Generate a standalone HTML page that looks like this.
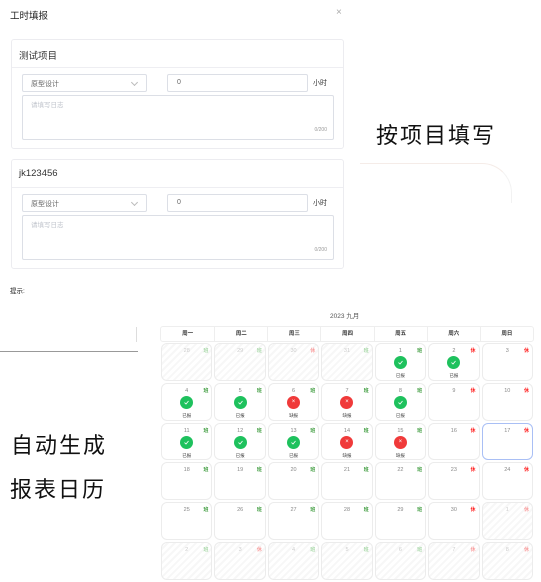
<!DOCTYPE html>
<html><head><meta charset="utf-8"><style>
*{margin:0;padding:0;box-sizing:border-box}
body{width:541px;height:582px;background:#fff;position:relative;overflow:hidden;font-family:"Liberation Sans","Noto Sans CJK SC",sans-serif;color:#333}
.a{position:absolute}
.card{position:absolute;left:11px;width:333px;height:110px;border:1px solid #ececf0;border-radius:3px}
.card .h{position:absolute;left:0;right:0;top:0;height:28px;border-bottom:1px solid #eeeef2;font-size:9.5px;padding:8px 0 0 7px;color:#333}
.sel,.inp,.ta{position:absolute;border:1px solid #dcdfe6;border-radius:2px;font-size:7px;color:#666}
.sel{left:10px;top:34px;width:125px;height:18px;padding:4px 0 0 8px}
.sel:after{content:"";position:absolute;right:9px;top:5px;width:4px;height:4px;border-right:1px solid #bbb;border-bottom:1px solid #bbb;transform:rotate(45deg)}
.inp{left:155px;top:34px;width:141px;height:18px;padding:4px 0 0 9px}
.hr{position:absolute;left:301px;top:38px;font-size:7px;color:#333}
.ta{left:10px;top:55px;width:312px;height:45px;padding:3px 0 0 8px;color:#c0c4cc;font-size:6.5px}
.ta i{position:absolute;right:6px;bottom:6px;font-style:normal;font-size:5px;color:#999}
.big{position:absolute;font-size:22px;color:#111;letter-spacing:2px;white-space:nowrap}
#cal{position:absolute;left:160px;top:326px;width:374px}
.hd{display:grid;grid-template-columns:repeat(7,1fr);height:16px;border:1px solid #eee;border-radius:3px}
.hd div{font-size:5.5px;text-align:center;line-height:15px;border-left:1px solid #eee;color:#333;font-weight:bold}
.hd div:first-child{border-left:none}
.g{display:grid;grid-template-columns:repeat(7,1fr);grid-auto-rows:39.8px}
.c{margin:1px;border:1px solid #ececec;border-radius:6px;position:relative;background:#fff}
.c.o{background:repeating-linear-gradient(135deg,#fff 0 3px,#f7f7f7 3px 5px);color:#ccc}
.c .n{position:absolute;left:0;right:0;top:4px;text-align:center;font-size:5.5px;color:#888}
.c.o .n{color:#ccc}
.c .b{position:absolute;right:3px;top:3px;font-size:5px;font-weight:bold}
.b.w{color:#3a9a3a}.b.r{color:#f22}
.c.o .b.w{color:#a8d8a8}.c.o .b.r{color:#f9a0a0}
.c .ic{position:absolute;left:50%;top:12px;margin-left:-6.5px;width:13px;height:13px;border-radius:50%;color:#fff;font-size:6px;text-align:center;line-height:13px}
.ic svg{position:absolute;left:4px;top:4px}
.ic.ok{background:#1ec15d}.ic.no{background:#f03a3a}
.c .l{position:absolute;left:0;right:0;top:29px;text-align:center;font-size:4.5px;color:#444}
.sel17{border:1.5px solid #a9bff5}
</style></head><body>
<div class="a" style="left:10px;top:8px;font-size:9.5px;color:#222">工时填报</div>
<div class="a" style="left:336px;top:7px;font-size:10px;color:#aaa">×</div>

<div class="card" style="top:39px"><div class="h">测试项目</div>
<div class="sel">原型设计</div><div class="inp">0</div><div class="hr">小时</div>
<div class="ta">请填写日志<i>0/200</i></div></div>

<div class="card" style="top:159px"><div class="h">jk123456</div>
<div class="sel">原型设计</div><div class="inp">0</div><div class="hr">小时</div>
<div class="ta">请填写日志<i>0/200</i></div></div>

<div class="a" style="left:10px;top:285px;font-size:6.5px;color:#222">提示:</div>
<div class="a" style="left:0;top:351px;width:138px;height:1px;background:#999"></div>
<div class="a" style="left:136px;top:327px;width:2px;height:15px;border-left:1px solid #ddd"></div>

<div class="big" style="left:376px;top:118px">按项目填写</div>
<div class="big" style="left:11px;top:428px">自动生成</div>
<div class="big" style="left:10px;top:472px">报表日历</div>
<div class="a" style="left:360px;top:163px;width:152px;height:40px;border-top:1px solid #f5ece8;border-right:1px solid #f2f2f2;border-top-right-radius:30px"></div>

<div class="a" style="left:330px;top:310px;font-size:6.5px;color:#555">2023 九月</div>

<div id="cal">
<div class="hd"><div>周一</div><div>周二</div><div>周三</div><div>周四</div><div>周五</div><div>周六</div><div>周日</div></div>
<div class="g">
<div class="c o"><span class="n">28</span><span class="b w">班</span></div>
<div class="c o"><span class="n">29</span><span class="b w">班</span></div>
<div class="c o"><span class="n">30</span><span class="b r">休</span></div>
<div class="c o"><span class="n">31</span><span class="b w">班</span></div>
<div class="c"><span class="n">1</span><span class="b w">班</span><span class="ic ok"><svg width="5" height="5" viewBox="0 0 5 5"><path d="M0.5 2.6L2 4L4.5 1" stroke="#fff" stroke-width="0.8" fill="none"/></svg></span><span class="l">已报</span></div>
<div class="c"><span class="n">2</span><span class="b r">休</span><span class="ic ok"><svg width="5" height="5" viewBox="0 0 5 5"><path d="M0.5 2.6L2 4L4.5 1" stroke="#fff" stroke-width="0.8" fill="none"/></svg></span><span class="l">已报</span></div>
<div class="c"><span class="n">3</span><span class="b r">休</span></div>

<div class="c"><span class="n">4</span><span class="b w">班</span><span class="ic ok"><svg width="5" height="5" viewBox="0 0 5 5"><path d="M0.5 2.6L2 4L4.5 1" stroke="#fff" stroke-width="0.8" fill="none"/></svg></span><span class="l">已报</span></div>
<div class="c"><span class="n">5</span><span class="b w">班</span><span class="ic ok"><svg width="5" height="5" viewBox="0 0 5 5"><path d="M0.5 2.6L2 4L4.5 1" stroke="#fff" stroke-width="0.8" fill="none"/></svg></span><span class="l">已报</span></div>
<div class="c"><span class="n">6</span><span class="b w">班</span><span class="ic no">×</span><span class="l">缺报</span></div>
<div class="c"><span class="n">7</span><span class="b w">班</span><span class="ic no">×</span><span class="l">缺报</span></div>
<div class="c"><span class="n">8</span><span class="b w">班</span><span class="ic ok"><svg width="5" height="5" viewBox="0 0 5 5"><path d="M0.5 2.6L2 4L4.5 1" stroke="#fff" stroke-width="0.8" fill="none"/></svg></span><span class="l">已报</span></div>
<div class="c"><span class="n">9</span><span class="b r">休</span></div>
<div class="c"><span class="n">10</span><span class="b r">休</span></div>

<div class="c"><span class="n">11</span><span class="b w">班</span><span class="ic ok"><svg width="5" height="5" viewBox="0 0 5 5"><path d="M0.5 2.6L2 4L4.5 1" stroke="#fff" stroke-width="0.8" fill="none"/></svg></span><span class="l">已报</span></div>
<div class="c"><span class="n">12</span><span class="b w">班</span><span class="ic ok"><svg width="5" height="5" viewBox="0 0 5 5"><path d="M0.5 2.6L2 4L4.5 1" stroke="#fff" stroke-width="0.8" fill="none"/></svg></span><span class="l">已报</span></div>
<div class="c"><span class="n">13</span><span class="b w">班</span><span class="ic ok"><svg width="5" height="5" viewBox="0 0 5 5"><path d="M0.5 2.6L2 4L4.5 1" stroke="#fff" stroke-width="0.8" fill="none"/></svg></span><span class="l">已报</span></div>
<div class="c"><span class="n">14</span><span class="b w">班</span><span class="ic no">×</span><span class="l">缺报</span></div>
<div class="c"><span class="n">15</span><span class="b w">班</span><span class="ic no">×</span><span class="l">缺报</span></div>
<div class="c"><span class="n">16</span><span class="b r">休</span></div>
<div class="c sel17"><span class="n">17</span><span class="b r">休</span></div>

<div class="c"><span class="n">18</span><span class="b w">班</span></div>
<div class="c"><span class="n">19</span><span class="b w">班</span></div>
<div class="c"><span class="n">20</span><span class="b w">班</span></div>
<div class="c"><span class="n">21</span><span class="b w">班</span></div>
<div class="c"><span class="n">22</span><span class="b w">班</span></div>
<div class="c"><span class="n">23</span><span class="b r">休</span></div>
<div class="c"><span class="n">24</span><span class="b r">休</span></div>

<div class="c"><span class="n">25</span><span class="b w">班</span></div>
<div class="c"><span class="n">26</span><span class="b w">班</span></div>
<div class="c"><span class="n">27</span><span class="b w">班</span></div>
<div class="c"><span class="n">28</span><span class="b w">班</span></div>
<div class="c"><span class="n">29</span><span class="b w">班</span></div>
<div class="c"><span class="n">30</span><span class="b r">休</span></div>
<div class="c o"><span class="n">1</span><span class="b r">休</span></div>

<div class="c o"><span class="n">2</span><span class="b w">班</span></div>
<div class="c o"><span class="n">3</span><span class="b r">休</span></div>
<div class="c o"><span class="n">4</span><span class="b w">班</span></div>
<div class="c o"><span class="n">5</span><span class="b w">班</span></div>
<div class="c o"><span class="n">6</span><span class="b w">班</span></div>
<div class="c o"><span class="n">7</span><span class="b r">休</span></div>
<div class="c o"><span class="n">8</span><span class="b r">休</span></div>
</div></div>
</body></html>
